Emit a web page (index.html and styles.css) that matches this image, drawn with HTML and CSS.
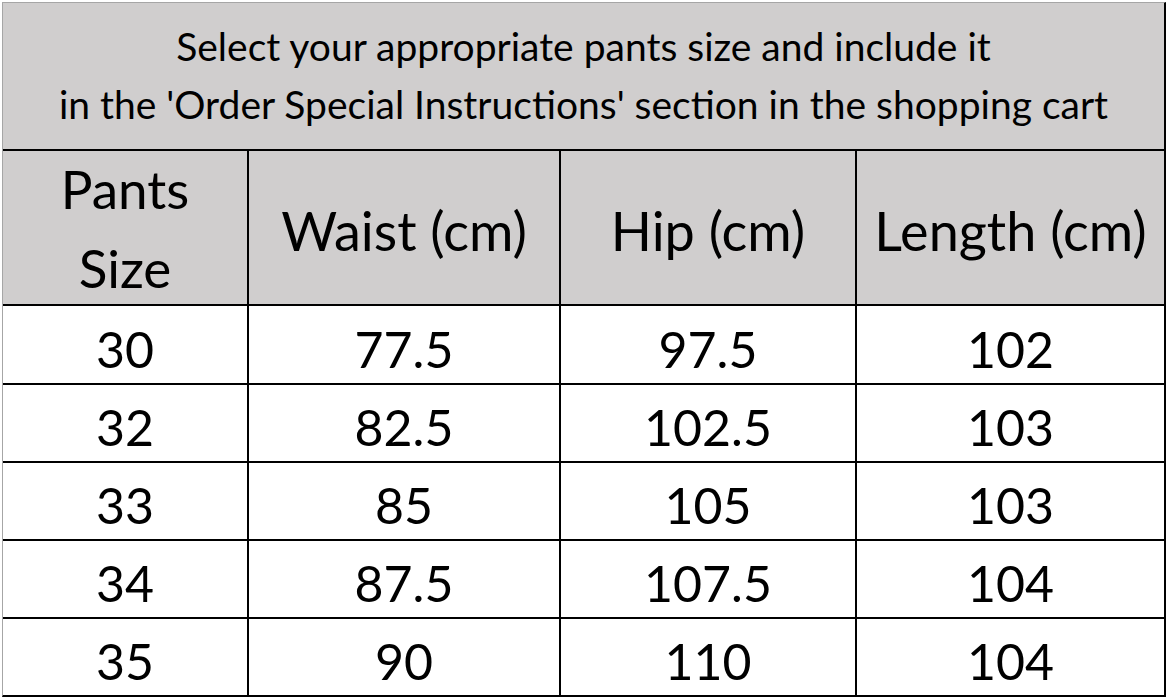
FILE: index.html
```html
<!DOCTYPE html>
<html>
<head>
<meta charset="utf-8">
<link rel="stylesheet" href="styles.css">
</head>
<body>
<div class="size-chart">
  <div class="cell title">Select your appropriate pants size and include it<br>in the 'Order Special Instructions' section in the shopping cart</div>
  <div class="cell head two-line">Pants<br>Size</div>
  <div class="cell head">Waist (cm)</div>
  <div class="cell head">Hip (cm)</div>
  <div class="cell head">Length (cm)</div>
  <div class="cell">30</div><div class="cell">77.5</div><div class="cell">97.5</div><div class="cell">102</div>
  <div class="cell">32</div><div class="cell">82.5</div><div class="cell">102.5</div><div class="cell">103</div>
  <div class="cell">33</div><div class="cell">85</div><div class="cell">105</div><div class="cell">103</div>
  <div class="cell">34</div><div class="cell">87.5</div><div class="cell">107.5</div><div class="cell">104</div>
  <div class="cell">35</div><div class="cell">90</div><div class="cell">110</div><div class="cell">104</div>
</div>
</body>
</html>
```
FILE: styles.css
```css
html, body {
  margin: 0;
  padding: 0;
  background: #ffffff;
}
body {
  padding: 2px 0 0 2px;
}
.size-chart {
  display: grid;
  width: 1164px;
  box-sizing: border-box;
  grid-template-columns: 244px 310px 294px 307px;
  grid-template-rows: 146px 153px 77px 76px 76px 76px 76px;
  gap: 2px;
  background: #000;
  border-top: 1px solid #a6a6a6;
  border-left: 1px solid #a6a6a6;
  border-right: 2px solid #000;
  border-bottom: 2px solid #000;
  font-family: Lato, "Liberation Sans", sans-serif;
  color: #000;
}
.cell {
  background: #ffffff;
  display: flex;
  align-items: center;
  justify-content: center;
  text-align: center;
  font-size: 50px;
  line-height: 1;
  padding-top: 8px;
  box-sizing: border-box;
}
.title {
  grid-column: 1 / -1;
  background: #d0cece;
  font-size: 39px;
  line-height: 58px;
  padding-top: 0;
  padding-bottom: 2px;
}
.head {
  background: #d0cece;
  font-size: 54px;
  padding-top: 6px;
}
.head.two-line {
  font-size: 53px;
  line-height: 79px;
  padding-top: 0;
}
```
